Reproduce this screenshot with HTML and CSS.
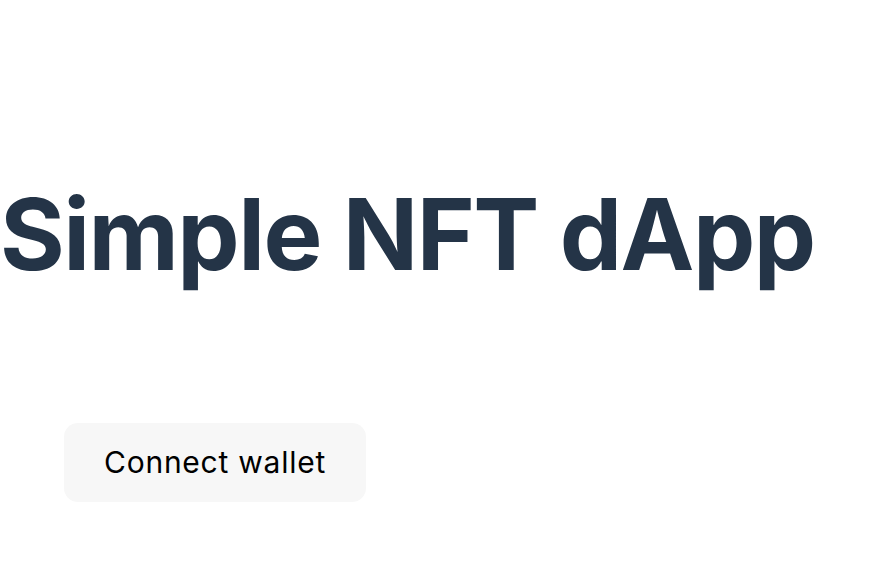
FILE: index.html
```html
<!DOCTYPE html>
<html>
<head>
<meta charset="utf-8">
<link rel="stylesheet" href="styles.css">
</head>
<body>
<main class="page">
  <h1 class="title">Simple NFT dApp</h1>
  <div class="actions">
    <button class="connect">Connect wallet</button>
  </div>
</main>
</body>
</html>
```
FILE: styles.css
```css
html, body {
  margin: 0;
  padding: 0;
  background: #ffffff;
  font-family: Inter, "Noto Sans", sans-serif;
}
.page {
  display: flex;
  flex-direction: column;
  padding-top: 175px;
}
.title {
  margin: 0;
  font-size: 99px;
  font-weight: 700;
  line-height: 1.2;
  letter-spacing: -1.55px;
  color: #243447;
  white-space: nowrap;
}
.actions {
  display: flex;
  padding: 129px 0 0 64px;
}
.connect {
  font-family: Inter, "Noto Sans", sans-serif;
  font-size: 30px;
  font-weight: 400;
  letter-spacing: 0.75px;
  color: #000000;
  background: #f7f7f7;
  border: none;
  border-radius: 14px;
  width: 302px;
  height: 79px;
  padding: 0;
}
```
